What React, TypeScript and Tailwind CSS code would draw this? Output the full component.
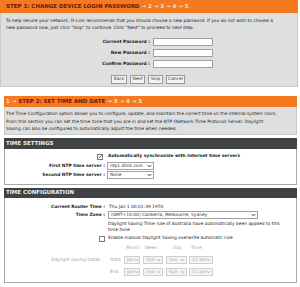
import React from "react";

function Chevron({ color = "#333" }: { color?: string }) {
  return (
    <svg width="5" height="4" viewBox="0 0 10 8" className="shrink-0">
      <path d="M1.5 2 L5 5.8 L8.5 2" fill="none" stroke={color} strokeWidth="1.8" />
    </svg>
  );
}

function Sel({ cls, text, disabled }: { cls: string; text: string; disabled?: boolean }) {
  return (
    <div
      className={
        "h-[8px] flex items-center justify-between pl-[2px] pr-[1px] border whitespace-nowrap overflow-hidden " +
        (disabled ? "border-[#cfcfcf] bg-[#f4f4f4] text-[#a8a8a8] " : "border-[#a0a0a0] bg-white text-[#333] ") +
        cls
      }
    >
      <span className="leading-none">{text}</span>
      <Chevron color={disabled ? "#aaa" : "#333"} />
    </div>
  );
}

function Check({ checked }: { checked?: boolean }) {
  return (
    <div className="w-[6px] h-[6px] border border-[#7a7a7a] bg-white flex items-center justify-center">
      {checked && (
        <svg width="5" height="5" viewBox="0 0 10 10">
          <path d="M1.5 5.2 L4 7.8 L8.8 1.8" fill="none" stroke="#222" strokeWidth="1.8" />
        </svg>
      )}
    </div>
  );
}

function Btn({ cls, children }: { cls: string; children: React.ReactNode }) {
  return (
    <div
      className={
        "h-[9px] flex items-center justify-center border border-[#9a9a9a] bg-[#f3f3f3] text-[#333] leading-none " + cls
      }
    >
      {children}
    </div>
  );
}

export default function App() {
  return (
    <div className="w-[300px] h-[287px] overflow-hidden bg-white font-['DejaVu_Sans',sans-serif] text-[#222]">
      {/* STEP 1 */}
      <div className="w-[298px]">
        <div className="h-[13px] bg-[#f47920] flex items-center pl-[6px] text-[5.5px] font-bold leading-none whitespace-nowrap">
          <span className="text-[#6e1a00]">STEP 1: CHANGE DEVICE LOGIN PASSWORD</span>
          <span className="text-[#ffe3b8]">&nbsp;→ 2 → 3 → 4 → 5</span>
        </div>
        <div className="h-[74px] bg-[#dfdfdf] border border-t-0 border-[#c9c9c9] pt-[4px] pl-[5px] text-[4.4px] leading-[7px]">
          <div className="whitespace-nowrap">
            To help secure your network, D-Link recommends that you should choose a new password. If you do not wish to choose a
          </div>
          <div className="whitespace-nowrap">
            new password now, just click "Skip" to continue. Click "Next" to proceed to next step.
          </div>
          <div className="mt-[7px] flex flex-col gap-[3px]">
            {["Current Password :", "New Password :", "Confirm Password :"].map((l) => (
              <div key={l} className="flex items-center h-[8px]">
                <div className="w-[144px] text-right font-bold leading-none">{l}</div>
                <div className="ml-[3px] w-[60px] h-[8px] bg-white border border-[#a0a0a0]" />
              </div>
            ))}
          </div>
          <div className="mt-[7px] ml-[105px] flex gap-[3px]">
            <Btn cls="w-[16px]">Back</Btn>
            <Btn cls="w-[15px]">Next</Btn>
            <Btn cls="w-[15px]">Skip</Btn>
            <Btn cls="w-[19px]">Cancel</Btn>
          </div>
        </div>
      </div>

      {/* STEP 2 */}
      <div className="mt-[9px] ml-[4px] w-[293px]">
        <div className="h-[11px] bg-[#f47920] flex items-center pl-[2px] text-[5.5px] font-bold leading-none whitespace-nowrap">
          <span className="text-[#ffe3b8]">1 →&nbsp;</span>
          <span className="text-[#6e1a00]">STEP 2: SET TIME AND DATE</span>
          <span className="text-[#ffe3b8]">&nbsp;→ 3 → 4 → 5</span>
        </div>
        <div className="h-[28px] bg-[#dfdfdf] border border-t-0 border-[#c9c9c9] pt-[3px] pl-[1px] text-[4.4px] leading-[7.5px]">
          <div className="whitespace-nowrap">
            The Time Configuration option allows you to configure, update, and maintain the correct time on the internal system clock.
          </div>
          <div className="whitespace-nowrap">
            From this section you can set the time zone that you are in and set the NTP (Network Time Protocol) Server. Daylight
          </div>
          <div className="whitespace-nowrap">
            Saving can also be configured to automatically adjust the time when needed.
          </div>
        </div>

        {/* TIME SETTINGS */}
        <div className="mt-[3px] h-[11px] bg-[#404343] flex items-center pl-[2px] text-[5.5px] font-bold text-[#eeeeee] leading-none">
          TIME SETTINGS
        </div>
        <div className="h-[36px] border border-t-0 border-[#a8a8a8] bg-white pt-[4px] text-[4.4px]">
          <div className="flex items-center h-[7px]">
            <div className="w-[100px] flex justify-end pr-[2px]">
              <Check checked />
            </div>
            <div className="ml-[3px] font-bold leading-none whitespace-nowrap">
              Automatically synchronize with Internet time servers
            </div>
          </div>
          <div className="mt-[2px] flex items-center h-[8px]">
            <div className="w-[100px] text-right font-bold leading-none whitespace-nowrap">First NTP time server :</div>
            <Sel cls="ml-[2px] w-[47px]" text="ntp1.dlink.com" />
          </div>
          <div className="mt-[1px] flex items-center h-[8px]">
            <div className="w-[100px] text-right font-bold leading-none whitespace-nowrap">Second NTP time server :</div>
            <Sel cls="ml-[2px] w-[47px]" text="None" />
          </div>
        </div>

        {/* TIME CONFIGURATION */}
        <div className="mt-[3px] h-[10px] bg-[#404343] flex items-center pl-[2px] text-[5.5px] font-bold text-[#eeeeee] leading-none">
          TIME CONFIGURATION
        </div>
        <div className="h-[85px] border border-t-0 border-[#a8a8a8] bg-white pt-[5px] text-[4.4px]">
          <div className="flex items-center h-[8px]">
            <div className="w-[100px] text-right font-bold leading-none whitespace-nowrap">Current Router Time :</div>
            <div className="ml-[4px] leading-none whitespace-nowrap">Thu Jan 1 00:01:39 1970</div>
          </div>
          <div className="flex items-center h-[8px]">
            <div className="w-[100px] text-right font-bold leading-none whitespace-nowrap">Time Zone :</div>
            <Sel cls="ml-[3px] w-[150px] h-[7px]" text="(GMT+10:00) Canberra, Melbourne, Sydney" />
          </div>
          <div className="mt-[2px] ml-[103px] leading-[6px]">
            <div className="whitespace-nowrap">
              Daylight Saving Time rule of Australia have automatically been applied to this
            </div>
            <div className="whitespace-nowrap">time zone</div>
          </div>
          <div className="mt-[2px] flex items-center h-[7px]">
            <div className="w-[100px] flex justify-end pr-[0px]">
              <Check />
            </div>
            <div className="ml-[3px] leading-none whitespace-nowrap">
              Enable manual Daylight Saving,overwrite automatic rule
            </div>
          </div>
          <div className="mt-[3px] flex items-center h-[6px] text-[#a8a8a8] leading-none">
            <div className="w-[119px]" />
            <div className="w-[16px] pl-[2px]">Month</div>
            <div className="ml-[3px] w-[20px] pl-[2px]">Week</div>
            <div className="ml-[3px] w-[21px] pl-[7px]">Day</div>
            <div className="ml-[2px] w-[24px] pl-[2px]">Time</div>
          </div>
          <div className="mt-[5px] flex items-center h-[8px]">
            <div className="w-[98px] text-right text-[#a0a0a0] leading-none whitespace-nowrap">Daylight Saving Dates :</div>
            <div className="ml-[7px] w-[14px] text-[#a0a0a0] leading-none">Start</div>
            <Sel cls="w-[16px]" text="Jan" disabled />
            <Sel cls="ml-[3px] w-[20px]" text="2nd" disabled />
            <Sel cls="ml-[3px] w-[21px]" text="Sun" disabled />
            <Sel cls="ml-[2px] w-[24px]" text="12 am" disabled />
          </div>
          <div className="mt-[4px] flex items-center h-[8px]">
            <div className="w-[98px]" />
            <div className="ml-[7px] w-[14px] text-[#a0a0a0] leading-none">End</div>
            <Sel cls="w-[16px]" text="Jan" disabled />
            <Sel cls="ml-[3px] w-[20px]" text="2nd" disabled />
            <Sel cls="ml-[3px] w-[21px]" text="Sun" disabled />
            <Sel cls="ml-[2px] w-[24px]" text="12 am" disabled />
          </div>
        </div>
      </div>
    </div>
  );
}
